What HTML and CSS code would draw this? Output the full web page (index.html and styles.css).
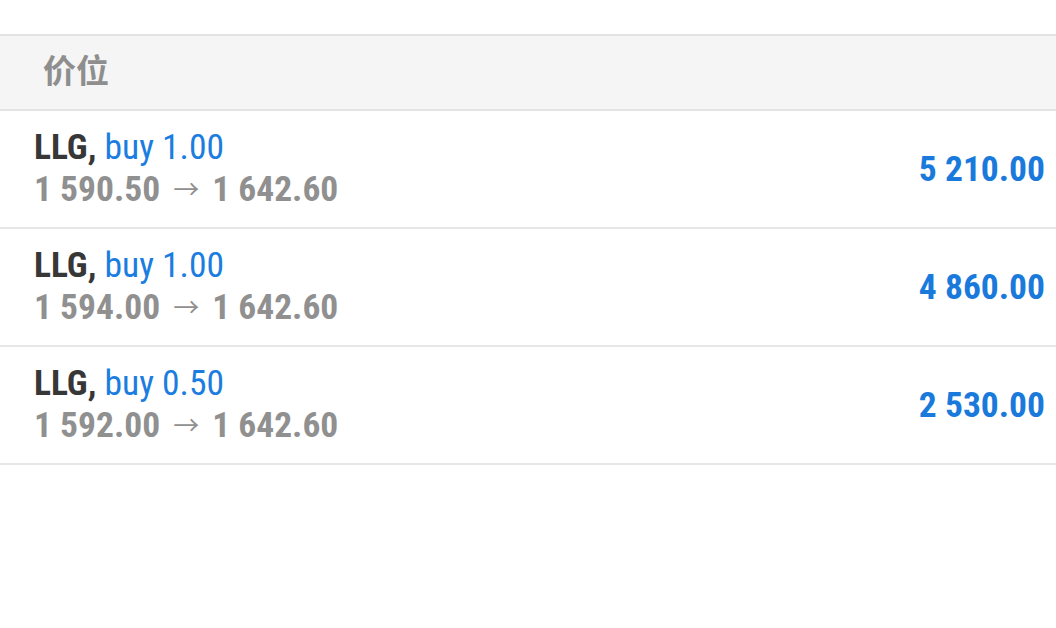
FILE: index.html
```html
<!DOCTYPE html>
<html lang="zh">
<head>
<meta charset="utf-8">
<link rel="stylesheet" href="styles.css">
</head>
<body>
<div class="top"></div>
<div class="header"><span class="header-title">价位</span></div>
<div class="list">
  <div class="row">
    <div class="info">
      <div class="line1"><span class="sym">LLG,</span> <span class="side">buy 1.00</span></div>
      <div class="line2">1 590.50<span class="arrow">→</span>1 642.60</div>
    </div>
    <div class="value">5 210.00</div>
  </div>
  <div class="row">
    <div class="info">
      <div class="line1"><span class="sym">LLG,</span> <span class="side">buy 1.00</span></div>
      <div class="line2">1 594.00<span class="arrow">→</span>1 642.60</div>
    </div>
    <div class="value">4 860.00</div>
  </div>
  <div class="row">
    <div class="info">
      <div class="line1"><span class="sym">LLG,</span> <span class="side">buy 0.50</span></div>
      <div class="line2">1 592.00<span class="arrow">→</span>1 642.60</div>
    </div>
    <div class="value">2 530.00</div>
  </div>
</div>
</body>
</html>
```
FILE: styles.css
```css
html, body {
  margin: 0;
  padding: 0;
  background: #ffffff;
}
body {
  font-family: Roboto, "Noto Sans CJK SC", sans-serif;
  font-stretch: condensed;
}
.top {
  height: 34px;
}
.header {
  height: 65px;
  border-top: 2px solid #e3e3e3;
  border-bottom: 2px solid #e3e3e3;
  background: #f5f5f5;
  display: flex;
  align-items: center;
  padding: 0 0 8px 43px;
}
.header-title {
  font-family: "Noto Sans CJK SC", sans-serif;
  font-weight: 700;
  font-size: 33px;
  color: #8e8e8e;
}
.row {
  height: 116px;
  border-bottom: 2px solid #e6e6e6;
  display: flex;
  align-items: center;
  justify-content: space-between;
  padding: 0 11px 0 34px;
}
.info {
  font-size: 35.5px;
  line-height: 42px;
}
.sym {
  font-weight: 700;
  color: #373737;
}
.side {
  color: #1b7de0;
}
.line2 {
  font-weight: 700;
  color: #909090;
}
.arrow {
  display: inline-block;
  font-weight: 400;
  font-stretch: normal;
  font-size: 26px;
  margin: 0 13px 0 13px;
  position: relative;
  top: -2px;
}
.value {
  font-size: 35.5px;
  line-height: 42px;
  font-weight: 700;
  color: #1a7adc;
}
```
